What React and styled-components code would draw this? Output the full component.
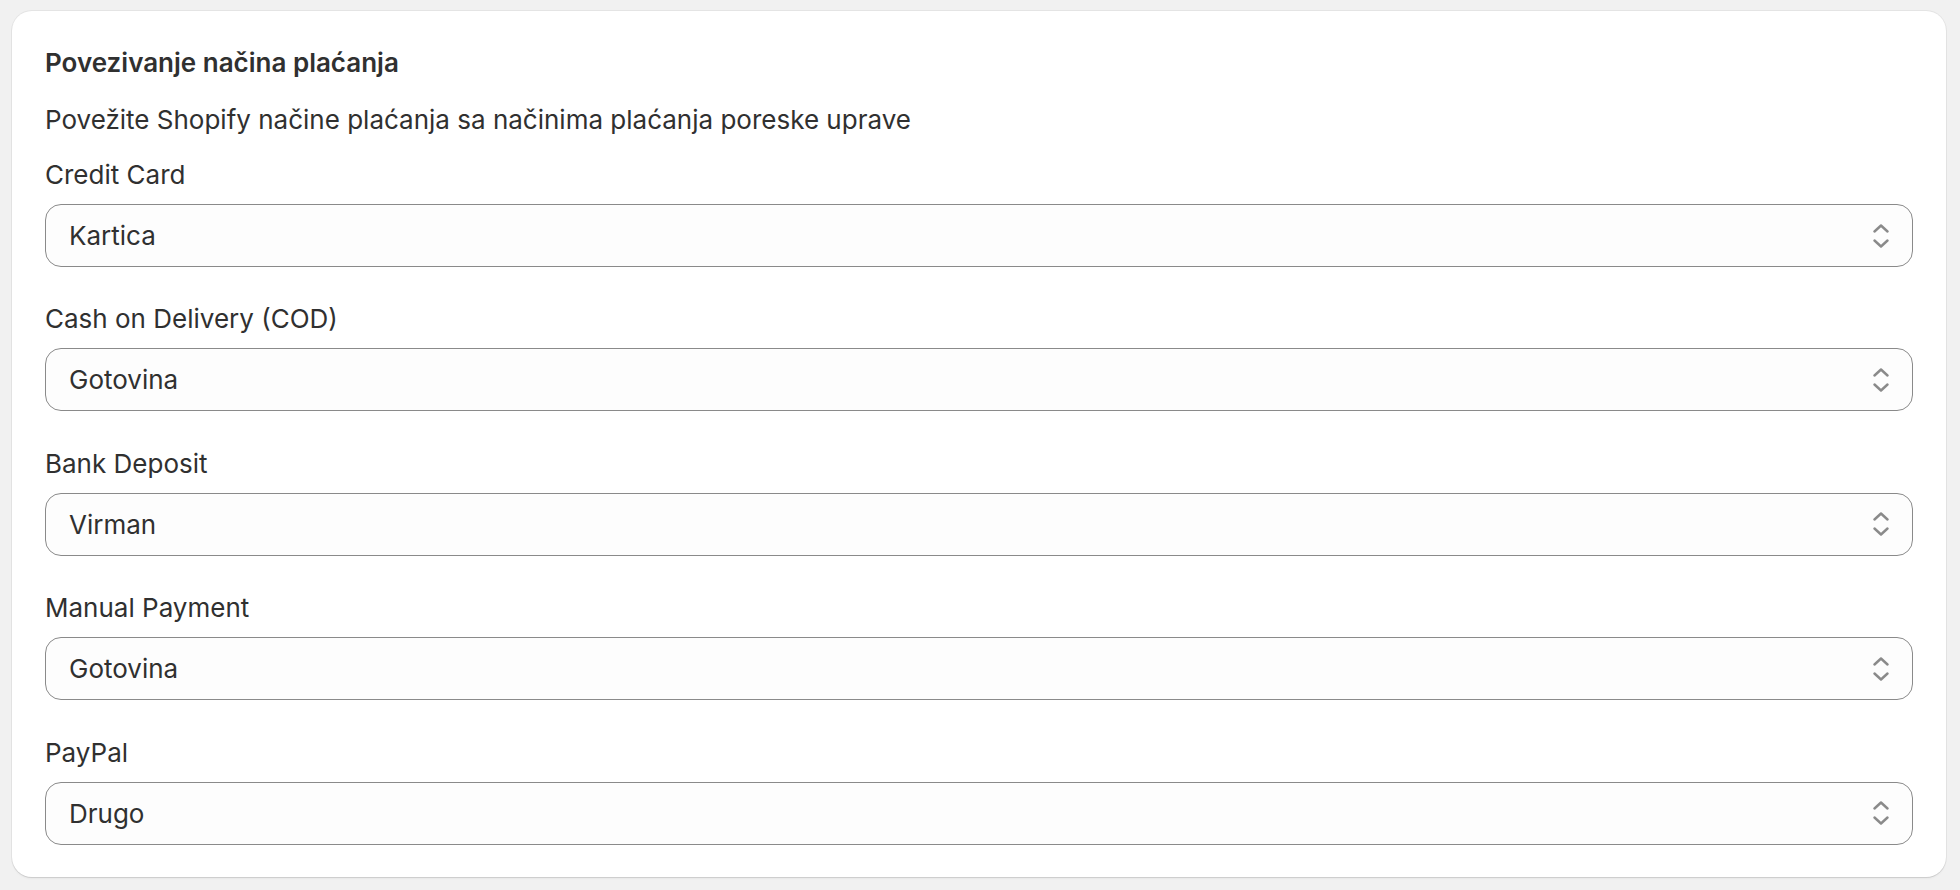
import React from "react";
import styled, { createGlobalStyle } from "styled-components";

const GlobalStyle = createGlobalStyle`
  html, body {
    margin: 0;
    padding: 0;
    background: #f1f1f1;
  }
  body {
    font-family: Inter, "Noto Sans", sans-serif;
    color: #303030;
  }
  * { box-sizing: border-box; }
`;

const mappings = [
  { label: "Credit Card", value: "Kartica" },
  { label: "Cash on Delivery (COD)", value: "Gotovina" },
  { label: "Bank Deposit", value: "Virman" },
  { label: "Manual Payment", value: "Gotovina" },
  { label: "PayPal", value: "Drugo" },
];

const options = ["Kartica", "Gotovina", "Virman", "Drugo"];

function SelectIcon() {
  return (
    <svg width="16" height="24" viewBox="0 0 16 24" fill="none">
      <path d="M1.5 7.5 L8 1.5 L14.5 7.5" stroke="#8a8a8a" strokeWidth="2.4" strokeLinecap="round" strokeLinejoin="round" />
      <path d="M1.5 16.5 L8 22.5 L14.5 16.5" stroke="#8a8a8a" strokeWidth="2.4" strokeLinecap="round" strokeLinejoin="round" />
    </svg>
  );
}

function App() {
  return (
    <>
      <GlobalStyle />
      <Page>
        <Card>
          <Title>Povezivanje načina plaćanja</Title>
          <Description>
            Povežite Shopify načine plaćanja sa načinima plaćanja poreske uprave
          </Description>
          <Fields>
            {mappings.map((m) => (
              <Field key={m.label}>
                <Label>{m.label}</Label>
                <SelectWrap>
                  <Select defaultValue={m.value}>
                    {options.map((o) => (
                      <option key={o} value={o}>{o}</option>
                    ))}
                  </Select>
                  <IconHolder>
                    <SelectIcon />
                  </IconHolder>
                </SelectWrap>
              </Field>
            ))}
          </Fields>
        </Card>
      </Page>
    </>
  );
}

export default App;

const Page = styled.div`
  padding: 11px 14px 14px 12px;
`;

const Card = styled.div`
  background: #ffffff;
  border-radius: 20px;
  box-shadow: 0 1px 0 0 rgba(26, 26, 26, 0.07), 0 0 0 1px rgba(26, 26, 26, 0.06),
    0 2px 2px rgba(0, 0, 0, 0.04);
  padding: 38px 33px 32px 33px;
`;

const Title = styled.h2`
  margin: 0;
  font-size: 26px;
  line-height: 28px;
  font-weight: 600;
  color: #303030;
`;

const Description = styled.p`
  margin: 28px 0 0 0;
  font-size: 26px;
  line-height: 30px;
  font-weight: 400;
`;

const Fields = styled.div`
  display: flex;
  flex-direction: column;
  gap: 37.4px;
  margin-top: 25px;
`;

const Field = styled.div`
  display: flex;
  flex-direction: column;
  gap: 14px;
`;

const Label = styled.label`
  font-size: 26px;
  line-height: 30px;
  color: #303030;
`;

const SelectWrap = styled.div`
  position: relative;
`;

const Select = styled.select`
  appearance: none;
  -webkit-appearance: none;
  width: 100%;
  height: 63px;
  margin: 0;
  padding: 0 60px 0 23px;
  border: 1.25px solid #8a8a8a;
  border-radius: 16px;
  background: #fdfdfd;
  font-family: Inter, "Noto Sans", sans-serif;
  font-size: 26px;
  color: #303030;
  outline: none;
`;

const IconHolder = styled.span`
  position: absolute;
  right: 24px;
  top: 50%;
  transform: translateY(-50%);
  display: flex;
  pointer-events: none;
`;
